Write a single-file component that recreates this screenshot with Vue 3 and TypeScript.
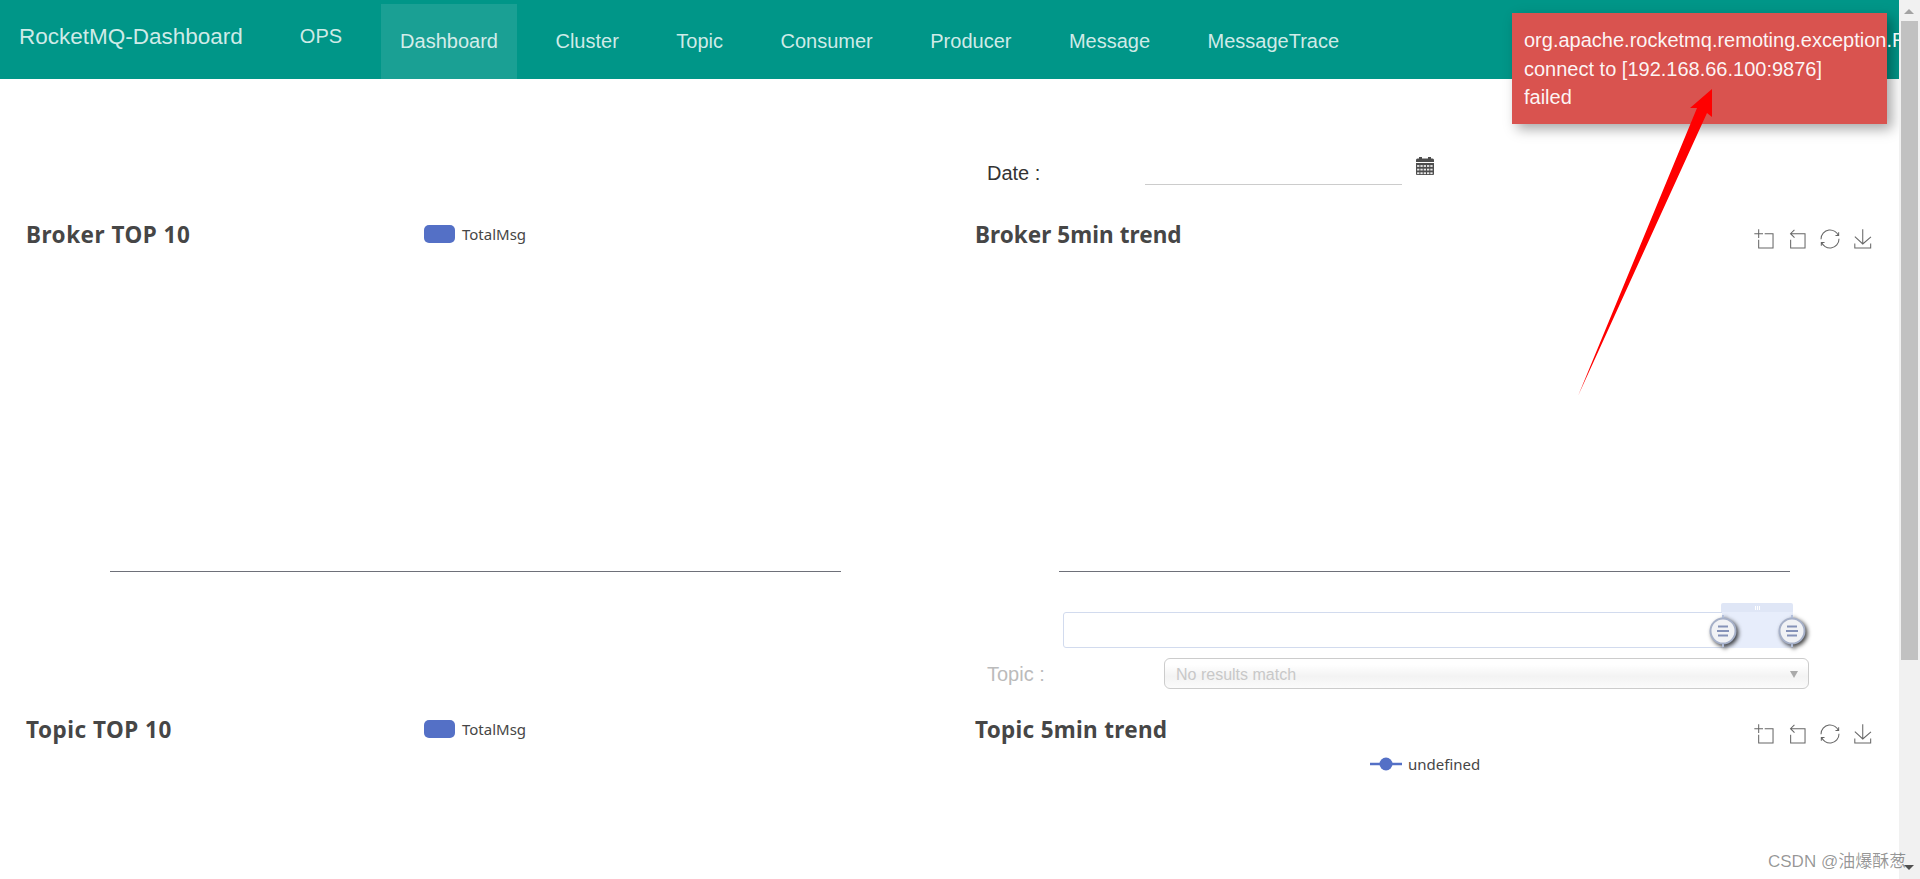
<template>
  <div class="page">
    <div class="main">
      <header class="navbar">
        <span class="brand">RocketMQ-Dashboard</span>
        <span class="ops">OPS</span>
        <nav class="nav">
          <a v-for="item in navItems" :key="item" class="nav-link" :class="{ active: item === 'Dashboard' }">{{ item }}</a>
        </nav>
      </header>

      <div class="board">
        <div></div>
        <div class="date-form">
          <label class="date-label">Date :</label>
          <div class="date-input"></div>
          <svg class="calendar" viewBox="0 0 18 18" width="18" height="18">
            <path d="M0 5V3q0-1.500 1.500-1.500H3V0h3v1.500h6V0h3v1.500h1.500Q18 1.500 18 3v2z" fill="#4d4d4d" />
            <path d="M0 6h18v11q0 1-1 1H1q-1 0-1-1z" fill="#4d4d4d" />
            <g fill="#e8e8e8">
              <template v-for="row in 3" :key="row">
                <rect v-for="col in 5" :key="col" :x="col * 3.3 - 2.2" :y="4.500 + row * 3.600" width="2.300" height="1.800" />
              </template>
            </g>
          </svg>
        </div>

        <section class="chart">
          <div class="chart-head">
            <h2 class="chart-title left-title">Broker TOP 10</h2>
            <span class="swatch"></span>
            <span class="legend-text">TotalMsg</span>
          </div>
          <div class="plot plot-left"></div>
        </section>

        <section class="chart chart-right">
          <div class="chart-head">
            <h2 class="chart-title">Broker 5min trend</h2>
            <div class="toolbox">
              <svg v-for="icon in toolIcons" :key="icon" viewBox="-1 -1 62 62" width="20" height="20">
                <path :d="icon" />
              </svg>
            </div>
          </div>
          <div class="plot plot-right"></div>
          <div class="zoom-slider">
            <div class="zoom-track">
              <div class="zoom-selected"></div>
              <div class="zoom-grip"><i></i><i></i><i></i></div>
              <svg v-for="side in ['left', 'right']" :key="side" class="zoom-handle" :class="side" viewBox="0 0 30 34" width="30" height="34">
                <path d="M15 1v5M15 28v5" stroke="#b4c0dc" stroke-width="2" />
                <circle cx="15" cy="17" r="12.500" fill="#f1f2f5" stroke="#a6b0c8" stroke-width="2" />
                <path d="M10 12.500h10M9 17h12M10 21.500h10" stroke="#8592b8" stroke-width="2" fill="none" />
              </svg>
            </div>
          </div>
        </section>

        <div></div>
        <div class="topic-form">
          <label class="topic-label">Topic :</label>
          <div class="topic-select">
            <span>No results match</span>
            <i class="select-arrow"></i>
          </div>
        </div>

        <section class="chart">
          <div class="chart-head">
            <h2 class="chart-title left-title">Topic TOP 10</h2>
            <span class="swatch"></span>
            <span class="legend-text">TotalMsg</span>
          </div>
        </section>

        <section class="chart chart-right">
          <div class="chart-head">
            <h2 class="chart-title topic-trend">Topic 5min trend</h2>
            <div class="toolbox">
              <svg v-for="icon in toolIcons" :key="icon" viewBox="-1 -1 62 62" width="20" height="20">
                <path :d="icon" />
              </svg>
            </div>
          </div>
          <div class="line-legend">
            <svg viewBox="0 0 32 14" width="32" height="14">
              <path d="M0 7h32" stroke="#5470c6" stroke-width="2.500" />
              <circle cx="16" cy="7" r="6.500" fill="#5470c6" />
            </svg>
            <span class="legend-text">undefined</span>
          </div>
        </section>
      </div>

      <div class="toast">org.apache.rocketmq.remoting.exception.RemotingConnectException: connect to [192.168.66.100:9876] failed</div>

      <svg class="annotation" viewBox="0 0 1899 879" width="1899" height="879">
        <polygon points="1578,396 1697,108 1690,108 1712,89 1712,117 1707,113" fill="#ff0000" />
      </svg>
    </div>

    <div class="scrollbar">
      <i class="arrow-up"></i>
      <div class="thumb"></div>
      <i class="arrow-down"></i>
    </div>

    <span class="watermark">CSDN @油爆酥葱</span>
  </div>
</template>

<script setup lang="ts">
const navItems: string[] = ['Dashboard', 'Cluster', 'Topic', 'Consumer', 'Producer', 'Message', 'MessageTrace']

// same shapes echarts uses for its toolbox
const toolIcons: string[] = [
  'M0,13.5h26.9 M13.5,26.9V0 M32.1,13.5H58V58H13.5 V32.1',
  'M22,1.4L9.9,13.5l12.3,12.3 M10.3,13.5H54.9v44.6 H10.3v-26',
  'M47,18.9h9.8V8.7 M56.3,20.1 C52.1,9,40.5,0.6,26.8,2.1C12.6,3.7,1.6,16.2,2.1,30.6 M13,41.1H3.1v10.2 M3.7,39.9c4.2,11.1,15.8,19.5,29.5,18 c14.2-1.6,25.2-14.1,24.7-28.5',
  'M4.7,22.9L29.3,45.5L54.7,23.4M4.6,43.6L4.6,58L53.8,58L53.8,43.6M29.2,45.1L29.2,0'
]
</script>

<style>
html,
body {
  margin: 0;
  background: #fff;
  overflow: hidden;
}
</style>

<style scoped>
.page {
  position: relative;
  display: flex;
  height: 879px;
  overflow: hidden;
  font-family: "Liberation Sans", Arial, sans-serif;
}

.main {
  position: relative;
  width: 1899px;
  overflow: hidden;
}

.navbar {
  display: flex;
  height: 79px;
  background: #009688;
  color: rgba(255, 255, 255, 0.82);
  font-size: 20px;
}

.brand {
  height: 72px;
  margin-left: 19px;
  font-size: 22.5px;
  line-height: 74px;
}

.ops {
  height: 72px;
  margin-left: 57px;
  line-height: 72px;
}

.nav {
  display: flex;
  gap: 19.5px;
  margin-left: 39px;
  padding-top: 4px;
}

.nav-link {
  padding: 0 19px;
  line-height: 75px;
}

.nav-link.active {
  background: rgba(255, 255, 255, 0.1);
}

.board {
  display: grid;
  grid-template-columns: 960px 939px;
  grid-template-rows: 130px 446px 49px auto;
}

.date-form {
  display: flex;
  align-items: flex-start;
  padding: 76px 0 0 27px;
}

.date-label {
  width: 158px;
  margin-top: 7px;
  font-size: 20px;
  line-height: 22px;
  color: #333;
}

.date-input {
  width: 257px;
  height: 29px;
  border-bottom: 1px solid #ccc;
}

.calendar {
  margin: 2px 0 0 14px;
}

.chart-head {
  display: flex;
  align-items: center;
  height: 50px;
  padding-left: 26px;
}

.chart-right .chart-head {
  padding-left: 15px;
  padding-right: 26px;
}

.chart-title {
  margin: 0;
  font-family: "Noto Sans", "Open Sans", sans-serif;
  font-size: 22.5px;
  font-weight: 700;
  color: #464646;
  letter-spacing: 0.06px;
}

.left-title {
  width: 398px;
  letter-spacing: 0.5px;
}

.topic-trend {
  letter-spacing: 0.3px;
}

.swatch {
  width: 31px;
  height: 18px;
  border-radius: 5px;
  background: #5470c6;
}

.legend-text {
  margin-left: 7px;
  font-family: "Noto Sans", "Open Sans", sans-serif;
  font-size: 15px;
  color: #464646;
}

.toolbox {
  display: flex;
  gap: 13px;
  margin: 10px 0 0 auto;
}

.toolbox path {
  fill: none;
  stroke: #666;
  stroke-width: 3.2;
}

.plot {
  height: 313px;
  border-bottom: 1px solid #6e7079;
  box-sizing: border-box;
  width: 731px;
}

.plot-left {
  margin-left: 110px;
}

.plot-right {
  margin-left: 99px;
}

.zoom-slider {
  margin: 40px 0 0 103px;
  width: 730px;
}

.zoom-track {
  position: relative;
  height: 36px;
  box-sizing: border-box;
  border: 1px solid #d2dbee;
  border-radius: 3px;
}

.zoom-selected {
  position: absolute;
  top: -1px;
  right: -1px;
  bottom: -1px;
  width: 71px;
  background: #e7edfb;
}

.zoom-grip {
  position: absolute;
  top: -10px;
  right: -1px;
  display: flex;
  justify-content: center;
  align-items: center;
  gap: 1px;
  width: 72px;
  height: 9px;
  background: #dfe6f6;
  border-radius: 2px 2px 0 0;
}

.zoom-grip i {
  width: 1px;
  height: 4px;
  background: #fff;
}

.zoom-handle {
  position: absolute;
  top: 1px;
  filter: blur(0.4px) drop-shadow(2px 2px 2px rgba(0, 0, 0, 0.75));
}

.zoom-handle.left {
  right: 54px;
}

.zoom-handle.right {
  right: -15px;
}

.topic-form {
  display: flex;
  align-items: flex-start;
  padding: 3px 0 0 27px;
}

.topic-label {
  width: 177px;
  margin-top: 5px;
  font-size: 20px;
  line-height: 22px;
  color: #bbb;
}

.topic-select {
  position: relative;
  width: 645px;
  height: 31px;
  box-sizing: border-box;
  padding-left: 11px;
  border: 1px solid #ccc;
  border-radius: 6px;
  background: linear-gradient(#fff 20%, #f3f3f3 60%, #fbfbfb);
  font-size: 16px;
  line-height: 31px;
  color: #c8c8c8;
}

.select-arrow {
  position: absolute;
  top: 12px;
  right: 10px;
  border-style: solid;
  border-width: 7px 4px 0;
  border-color: #aaa transparent transparent;
}

.line-legend {
  display: flex;
  align-items: center;
  height: 20px;
  margin-left: 410px;
  line-height: 20px;
}

.line-legend .legend-text {
  margin-left: 6px;
}

.toast {
  position: absolute;
  top: 13px;
  right: 12px;
  width: 375px;
  height: 111px;
  box-sizing: border-box;
  padding: 13px 12px;
  background: #d9534f;
  box-shadow: 5px 5px 12px rgba(0, 0, 0, 0.35);
  font-size: 20px;
  line-height: 28.5px;
  color: rgba(255, 255, 255, 0.95);
}

.annotation {
  position: absolute;
  top: 0;
  left: 0;
  pointer-events: none;
}

.scrollbar {
  position: relative;
  width: 21px;
  background: #f1f1f1;
}

.thumb {
  position: absolute;
  top: 21px;
  left: 2px;
  width: 17px;
  height: 639px;
  background: #c1c1c1;
}

.arrow-up {
  position: absolute;
  top: 9px;
  left: 5px;
  border-style: solid;
  border-width: 0 5px 5px;
  border-color: transparent transparent #a3a3a3;
}

.arrow-down {
  position: absolute;
  top: 865px;
  left: 5px;
  border-style: solid;
  border-width: 5px 5px 0;
  border-color: #505050 transparent transparent;
}

.watermark {
  position: absolute;
  top: 852px;
  left: 1768px;
  font-family: "Liberation Sans", "Noto Sans CJK SC", sans-serif;
  font-size: 17px;
  line-height: 20px;
  color: rgba(0, 0, 0, 0.42);
  white-space: nowrap;
}
</style>
